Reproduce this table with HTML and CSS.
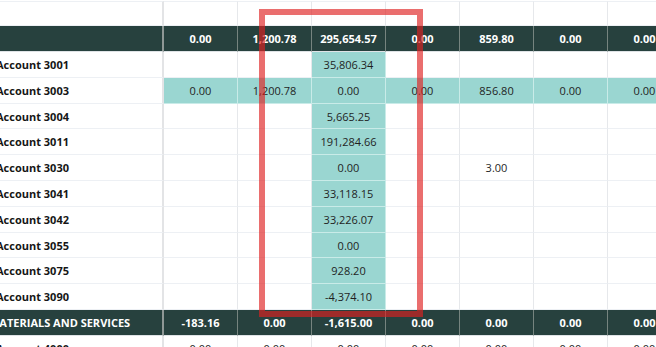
FILE: index.html
```html
<!DOCTYPE html>
<html>
<head>
<meta charset="utf-8">
<link rel="stylesheet" href="styles.css">
</head>
<body>
<div class="viewport">
  <div class="sheet">
    <div class="row row-top">
      <div class="cell label"></div><div class="cell"></div><div class="cell"></div><div class="cell"></div><div class="cell"></div><div class="cell"></div><div class="cell"></div><div class="cell"></div>
    </div>
    <div class="row row-dark">
      <div class="cell label"></div><div class="cell">0.00</div><div class="cell">1,200.78</div><div class="cell">295,654.57</div><div class="cell">0.00</div><div class="cell">859.80</div><div class="cell">0.00</div><div class="cell">0.00</div>
    </div>
    <div class="row">
      <div class="cell label">Account 3001</div><div class="cell"></div><div class="cell"></div><div class="cell hl">35,806.34</div><div class="cell"></div><div class="cell"></div><div class="cell"></div><div class="cell"></div>
    </div>
    <div class="row">
      <div class="cell label">Account 3003</div><div class="cell hl">0.00</div><div class="cell hl">1,200.78</div><div class="cell hl">0.00</div><div class="cell hl">0.00</div><div class="cell hl">856.80</div><div class="cell hl">0.00</div><div class="cell hl">0.00</div>
    </div>
    <div class="row">
      <div class="cell label">Account 3004</div><div class="cell"></div><div class="cell"></div><div class="cell hl">5,665.25</div><div class="cell"></div><div class="cell"></div><div class="cell"></div><div class="cell"></div>
    </div>
    <div class="row">
      <div class="cell label">Account 3011</div><div class="cell"></div><div class="cell"></div><div class="cell hl">191,284.66</div><div class="cell"></div><div class="cell"></div><div class="cell"></div><div class="cell"></div>
    </div>
    <div class="row">
      <div class="cell label">Account 3030</div><div class="cell"></div><div class="cell"></div><div class="cell hl">0.00</div><div class="cell"></div><div class="cell">3.00</div><div class="cell"></div><div class="cell"></div>
    </div>
    <div class="row">
      <div class="cell label">Account 3041</div><div class="cell"></div><div class="cell"></div><div class="cell hl">33,118.15</div><div class="cell"></div><div class="cell"></div><div class="cell"></div><div class="cell"></div>
    </div>
    <div class="row">
      <div class="cell label">Account 3042</div><div class="cell"></div><div class="cell"></div><div class="cell hl">33,226.07</div><div class="cell"></div><div class="cell"></div><div class="cell"></div><div class="cell"></div>
    </div>
    <div class="row">
      <div class="cell label">Account 3055</div><div class="cell"></div><div class="cell"></div><div class="cell hl">0.00</div><div class="cell"></div><div class="cell"></div><div class="cell"></div><div class="cell"></div>
    </div>
    <div class="row">
      <div class="cell label">Account 3075</div><div class="cell"></div><div class="cell"></div><div class="cell hl">928.20</div><div class="cell"></div><div class="cell"></div><div class="cell"></div><div class="cell"></div>
    </div>
    <div class="row">
      <div class="cell label">Account 3090</div><div class="cell"></div><div class="cell"></div><div class="cell hl">-4,374.10</div><div class="cell"></div><div class="cell"></div><div class="cell"></div><div class="cell"></div>
    </div>
    <div class="row row-dark">
      <div class="cell label label-group">MATERIALS AND SERVICES</div><div class="cell">-183.16</div><div class="cell">0.00</div><div class="cell">-1,615.00</div><div class="cell">0.00</div><div class="cell">0.00</div><div class="cell">0.00</div><div class="cell">0.00</div>
    </div>
    <div class="row">
      <div class="cell label">Account 4000</div><div class="cell">0.00</div><div class="cell">0.00</div><div class="cell">0.00</div><div class="cell">0.00</div><div class="cell">0.00</div><div class="cell">0.00</div><div class="cell">0.00</div>
    </div>
  </div>
  <div class="focus-box"></div>
</div>
</body>
</html>
```

FILE: styles.css
```css
* { box-sizing: border-box; }
html, body { margin: 0; padding: 0; background: #ffffff; }
.viewport {
  position: relative;
  width: 656px;
  height: 347px;
  overflow: hidden;
  font-family: "Open Sans", "Noto Sans", sans-serif;
  color: #1f1f1f;
}
.sheet {
  padding-top: 1px;
}
.row {
  display: grid;
  grid-template-columns: 164px repeat(7, 74px);
  height: 25.8px;
}
.cell {
  border-right: 1px solid #e6e8eb;
  border-bottom: 1px solid #edf0f4;
  font-size: 11px;
  display: flex;
  align-items: center;
  justify-content: center;
  white-space: nowrap;
  overflow: hidden;
}
.cell.label {
  justify-content: flex-start;
  border-right: 2px solid #e3e4e6;
  font-weight: 700;
  font-size: 11px;
  text-indent: -4px;
  color: #161616;
}
.row-top .cell { border-top: 1px solid #edf0f4; }
.row-top { height: 25.3px; }
.cell.hl {
  background: #9ad6d1;
  border-right-color: #c9ebe8;
  border-bottom-color: #c9ebe8;
}
.row-dark .cell {
  background: #27413e;
  color: #ffffff;
  font-weight: 700;
  border-right-color: #76847f;
  border-bottom-color: #dfe3e6;
}
.row-dark .cell.label { border-right-color: #8f9896; }
.cell.label-group { text-indent: -11px; }
.focus-box {
  position: absolute;
  left: 259px;
  top: 9px;
  width: 164px;
  height: 308px;
  border: 6px solid rgba(222, 32, 32, 0.65);
}
```
